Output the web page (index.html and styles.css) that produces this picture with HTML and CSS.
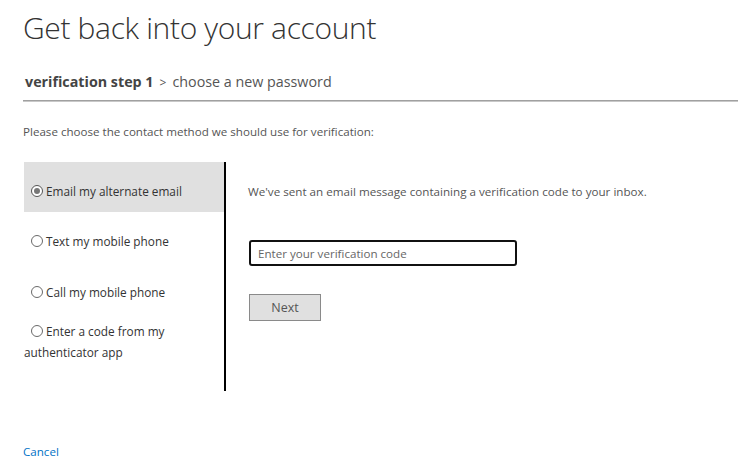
FILE: index.html
```html
<!DOCTYPE html>
<html lang="en">
<head>
<meta charset="utf-8">
<title>Get back into your account</title>
<link rel="stylesheet" href="styles.css">
</head>
<body>
<div class="page">
  <h1 class="title">Get back into your account</h1>
  <div class="steps"><span class="step-current">verification step 1</span><span class="step-sep">&gt;</span><span class="step-next">choose a new password</span></div>
  <div class="rule"></div>
  <p class="intro">Please choose the contact method we should use for verification:</p>
  <div class="panel">
    <div class="methods">
      <div class="method selected"><span class="radio checked"></span>Email my alternate email</div>
      <div class="method"><span class="radio"></span>Text my mobile phone</div>
      <div class="method"><span class="radio"></span>Call my mobile phone</div>
      <div class="method multi"><span class="radio"></span>Enter a code from my authenticator app</div>
    </div>
    <div class="detail">
      <p class="sent">We've sent an email message containing a verification code to your inbox.</p>
      <input class="code" type="text" placeholder="Enter your verification code">
      <button class="next" type="button">Next</button>
    </div>
  </div>
  <a class="cancel" href="#">Cancel</a>
</div>
</body>
</html>
```
FILE: styles.css
```css
html, body {
  margin: 0;
  padding: 0;
  background: #fff;
}
body {
  font-family: "Open Sans", "Noto Sans", sans-serif;
  color: #333;
}
.page {
  padding-left: 23px;
}
.title {
  margin: 0;
  padding-top: 8px;
  font-size: 30px;
  font-weight: 300;
  line-height: 40px;
  color: #333;
  letter-spacing: -0.35px;
}
.steps {
  margin-top: 23px;
  padding-left: 2px;
  font-size: 14.3px;
  line-height: 22px;
  color: #555;
}
.step-current {
  font-weight: 700;
  color: #444;
}
.step-sep {
  margin: 0 6px;
  font-size: 12px;
}
.rule {
  margin-top: 6px;
  height: 1px;
  border-top: 1px solid #a0a0a0;
  background: #c8c8c8;
}
.intro {
  margin: 20px 0 0 0;
  font-size: 11.6px;
  line-height: 20px;
  color: #555;
}
.panel {
  display: flex;
  margin-top: 20px;
  margin-left: 1px;
  height: 229px;
}
.methods {
  width: 200px;
  border-right: 2px solid #000;
  font-size: 11.8px;
  color: #333;
}
.method {
  padding: 20px 0 12px 7px;
  line-height: 18px;
  display: flex;
  align-items: center;
}
.method:nth-child(3) {
  padding-top: 21px;
}
.method.selected {
  background: #e0e0e0;
}
.method.multi {
  display: block;
  padding: 8px 0 0 0;
  line-height: 21px;
  padding-right: 50px;
}
.method.multi .radio {
  margin-left: 7px;
  vertical-align: -1px;
}
.radio {
  display: inline-block;
  box-sizing: border-box;
  width: 12px;
  height: 12px;
  border: 1px solid #6a6a6a;
  border-radius: 50%;
  margin-right: 3px;
  position: relative;
  background: #fff;
}
.radio.checked {
  border-color: #555;
}
.radio.checked::after {
  content: "";
  position: absolute;
  left: 2px;
  top: 2px;
  width: 6px;
  height: 6px;
  border-radius: 50%;
  background: #777;
}
.detail {
  padding-left: 22px;
  display: flex;
  flex-direction: column;
  align-items: flex-start;
}
.sent {
  margin: 20px 0 0 0;
  font-size: 11.65px;
  line-height: 20px;
  color: #555;
}
.code {
  margin-top: 38px;
  margin-left: 1px;
  box-sizing: border-box;
  width: 268px;
  height: 26px;
  border: 2px solid #111;
  border-radius: 3px;
  padding: 0 7px;
  font-family: inherit;
  font-size: 11.6px;
  color: #333;
  outline: none;
}
.code::placeholder {
  color: #666;
}
.next {
  margin-top: 28px;
  margin-left: 1px;
  box-sizing: border-box;
  width: 72px;
  height: 27px;
  border: 1px solid #8a8a8a;
  background: #e0e0e0;
  font-family: inherit;
  font-size: 12.5px;
  color: #555;
  padding: 0;
}
.cancel {
  display: inline-block;
  margin-top: 51px;
  font-size: 11.6px;
  line-height: 20px;
  color: #0072c6;
  text-decoration: none;
}
```
